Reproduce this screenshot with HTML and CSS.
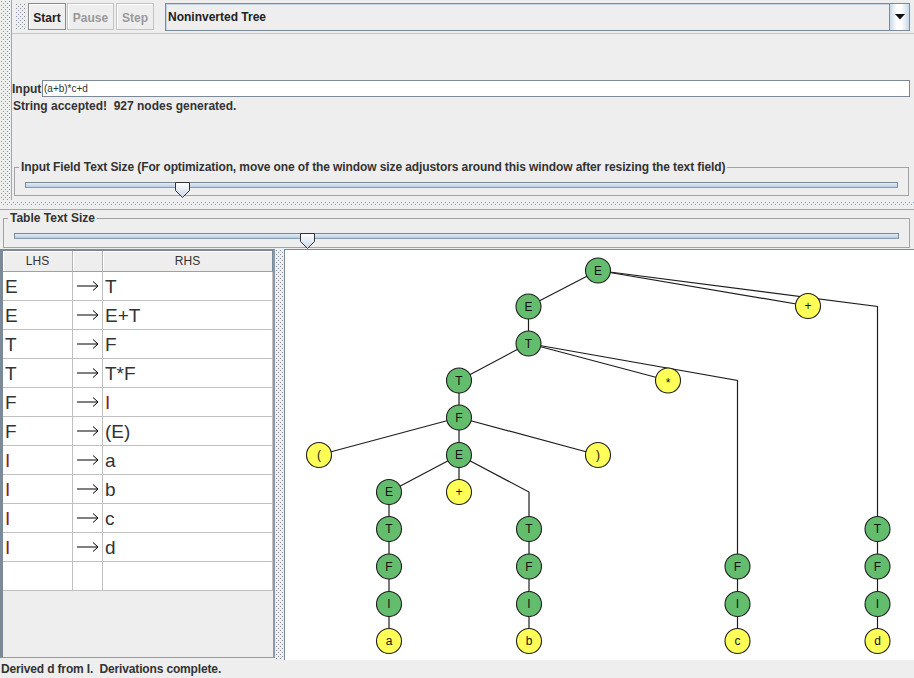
FILE: index.html
```html
<!DOCTYPE html>
<html>
<head>
<meta charset="utf-8">
<title>Brute Force Parser</title>
<link rel="stylesheet" href="styles.css">
</head>
<body>
<div class="app">
  <div class="upper">
    <div class="side-grip bumps"></div>
    <div class="upper-main">
      <div class="toolbar">
        <div class="tb-grip bumps"></div>
        <button class="tbtn start">Start</button>
        <button class="tbtn pause off">Pause</button>
        <button class="tbtn step off">Step</button>
        <div class="combo">
          <span class="combo-text">Noninverted Tree</span>
          <span class="combo-arrow"><svg width="10" height="6" viewBox="0 0 10 6"><path d="M0 0H10L5 5.5Z" fill="#111"/></svg></span>
        </div>
      </div>
      <div class="input-row">
        <span class="input-label">Input</span>
        <div class="field">(a+b)*c+d</div>
      </div>
      <div class="msg">String accepted!&nbsp; 927 nodes generated.</div>
      <fieldset class="titled t1">
        <legend>Input Field Text Size (For optimization, move one of the window size adjustors around this window after resizing the text field)</legend>
        <div class="slider s1">
          <div class="track"></div>
          <svg class="thumb" style="left:150px" width="15" height="16" viewBox="0 0 15 16"><defs><linearGradient id="tg1" x1="0" y1="0" x2="0" y2="1"><stop offset="0" stop-color="#ffffff"/><stop offset="1" stop-color="#c6d7ea"/></linearGradient></defs><path d="M0.5 0.5H14.5V8.5L7.5 15.5L0.5 8.5Z" fill="url(#tg1)" stroke="#333"/></svg>
        </div>
      </fieldset>
    </div>
  </div>
  <div class="hdivider"></div>
  <fieldset class="titled t2">
    <legend>Table Text Size</legend>
    <div class="slider s2">
      <div class="track"></div>
      <svg class="thumb" style="left:286px" width="15" height="16" viewBox="0 0 15 16"><defs><linearGradient id="tg2" x1="0" y1="0" x2="0" y2="1"><stop offset="0" stop-color="#ffffff"/><stop offset="1" stop-color="#c6d7ea"/></linearGradient></defs><path d="M0.5 0.5H14.5V8.5L7.5 15.5L0.5 8.5Z" fill="url(#tg2)" stroke="#333"/></svg>
    </div>
  </fieldset>
  <div class="lower">
    <div class="table-pane">
      <table class="grammar">
        <colgroup><col class="c1"><col class="c2"><col class="c3"></colgroup>
        <thead><tr><th>LHS</th><th></th><th>RHS</th></tr></thead>
        <tbody>
          <tr><td>E</td><td class="arr"><svg width="22" height="10" viewBox="0 0 22 10"><path d="M0 5H21M16 0.5L21 5L16 9.5" fill="none" stroke="#000" stroke-width="1"/></svg></td><td>T</td></tr>
          <tr><td>E</td><td class="arr"><svg width="22" height="10" viewBox="0 0 22 10"><path d="M0 5H21M16 0.5L21 5L16 9.5" fill="none" stroke="#000" stroke-width="1"/></svg></td><td>E+T</td></tr>
          <tr><td>T</td><td class="arr"><svg width="22" height="10" viewBox="0 0 22 10"><path d="M0 5H21M16 0.5L21 5L16 9.5" fill="none" stroke="#000" stroke-width="1"/></svg></td><td>F</td></tr>
          <tr><td>T</td><td class="arr"><svg width="22" height="10" viewBox="0 0 22 10"><path d="M0 5H21M16 0.5L21 5L16 9.5" fill="none" stroke="#000" stroke-width="1"/></svg></td><td>T*F</td></tr>
          <tr><td>F</td><td class="arr"><svg width="22" height="10" viewBox="0 0 22 10"><path d="M0 5H21M16 0.5L21 5L16 9.5" fill="none" stroke="#000" stroke-width="1"/></svg></td><td><span class="var">I</span></td></tr>
          <tr><td>F</td><td class="arr"><svg width="22" height="10" viewBox="0 0 22 10"><path d="M0 5H21M16 0.5L21 5L16 9.5" fill="none" stroke="#000" stroke-width="1"/></svg></td><td>(E)</td></tr>
          <tr><td><span class="var">I</span></td><td class="arr"><svg width="22" height="10" viewBox="0 0 22 10"><path d="M0 5H21M16 0.5L21 5L16 9.5" fill="none" stroke="#000" stroke-width="1"/></svg></td><td>a</td></tr>
          <tr><td><span class="var">I</span></td><td class="arr"><svg width="22" height="10" viewBox="0 0 22 10"><path d="M0 5H21M16 0.5L21 5L16 9.5" fill="none" stroke="#000" stroke-width="1"/></svg></td><td>b</td></tr>
          <tr><td><span class="var">I</span></td><td class="arr"><svg width="22" height="10" viewBox="0 0 22 10"><path d="M0 5H21M16 0.5L21 5L16 9.5" fill="none" stroke="#000" stroke-width="1"/></svg></td><td>c</td></tr>
          <tr><td><span class="var">I</span></td><td class="arr"><svg width="22" height="10" viewBox="0 0 22 10"><path d="M0 5H21M16 0.5L21 5L16 9.5" fill="none" stroke="#000" stroke-width="1"/></svg></td><td>d</td></tr>
          <tr><td></td><td></td><td></td></tr>
        </tbody>
      </table>
    </div>
    <div class="vdivider bumps"></div>
    <div class="tree-pane">
      <svg class="tree" width="629" height="409" viewBox="285 251 629 409">
        <g class="edges">
          <path d="M598 271.5L528.5 307.5"/>
          <path d="M598 271.5L808 307"/>
          <path d="M598 271.5L877.5 307.5L877.5 530"/>
          <path d="M528.5 307.5L528.5 344.5"/>
          <path d="M528.5 344.5L459 381.5"/>
          <path d="M528.5 344.5L668 381.5"/>
          <path d="M528.5 344.5L737.5 381.5L737.5 567.5"/>
          <path d="M459 381.5L459 418.5"/>
          <path d="M459 418.5L319 456"/>
          <path d="M459 418.5L459 456"/>
          <path d="M459 418.5L598 456"/>
          <path d="M459 456L389 493"/>
          <path d="M459 456L459 493"/>
          <path d="M459 456L529 493L529 530"/>
          <path d="M389 493L389 642"/>
          <path d="M529 530L529 642"/>
          <path d="M737.5 567.5L737.5 642"/>
          <path d="M877.5 530L877.5 642"/>
        </g>
        <g class="nt">
          <circle cx="598" cy="271.5" r="12.5"/><text x="598" y="275.8">E</text>
          <circle cx="528.5" cy="307.5" r="12.5"/><text x="528.5" y="311.8">E</text>
          <circle cx="528.5" cy="344.5" r="12.5"/><text x="528.5" y="348.8">T</text>
          <circle cx="459" cy="381.5" r="12.5"/><text x="459" y="385.8">T</text>
          <circle cx="459" cy="418.5" r="12.5"/><text x="459" y="422.8">F</text>
          <circle cx="459" cy="456" r="12.5"/><text x="459" y="460.3">E</text>
          <circle cx="389" cy="493" r="12.5"/><text x="389" y="497.3">E</text>
          <circle cx="389" cy="530" r="12.5"/><text x="389" y="534.3">T</text>
          <circle cx="529" cy="530" r="12.5"/><text x="529" y="534.3">T</text>
          <circle cx="877.5" cy="530" r="12.5"/><text x="877.5" y="534.3">T</text>
          <circle cx="389" cy="567.5" r="12.5"/><text x="389" y="571.8">F</text>
          <circle cx="529" cy="567.5" r="12.5"/><text x="529" y="571.8">F</text>
          <circle cx="737.5" cy="567.5" r="12.5"/><text x="737.5" y="571.8">F</text>
          <circle cx="877.5" cy="567.5" r="12.5"/><text x="877.5" y="571.8">F</text>
          <circle cx="389" cy="605" r="12.5"/><text x="389" y="609.3">I</text>
          <circle cx="529" cy="605" r="12.5"/><text x="529" y="609.3">I</text>
          <circle cx="737.5" cy="605" r="12.5"/><text x="737.5" y="609.3">I</text>
          <circle cx="877.5" cy="605" r="12.5"/><text x="877.5" y="609.3">I</text>
        </g>
        <g class="tm">
          <circle cx="808" cy="307" r="12.5"/><text x="808" y="311">+</text>
          <circle cx="668" cy="381.5" r="12.5"/><text x="668" y="387.5">*</text>
          <circle cx="319" cy="456" r="12.5"/><text x="319" y="460.3">(</text>
          <circle cx="598" cy="456" r="12.5"/><text x="598" y="460.3">)</text>
          <circle cx="459" cy="493" r="12.5"/><text x="459" y="497">+</text>
          <circle cx="389" cy="642" r="12.5"/><text x="389" y="646.3">a</text>
          <circle cx="529" cy="642" r="12.5"/><text x="529" y="646.3">b</text>
          <circle cx="737.5" cy="642" r="12.5"/><text x="737.5" y="646.3">c</text>
          <circle cx="877.5" cy="642" r="12.5"/><text x="877.5" y="646.3">d</text>
        </g>
      </svg>
    </div>
  </div>
  <div class="status">Derived d from I.&nbsp; Derivations complete.</div>
</div>
</body>
</html>
```

FILE: styles.css
```css
* { box-sizing: border-box; }
html, body { margin: 0; padding: 0; }
body {
  width: 914px;
  height: 678px;
  overflow: hidden;
  background: #eeeeee;
  font-family: "Liberation Sans", Arial, sans-serif;
  font-size: 12px;
  color: #333333;
}
.app { display: flex; flex-direction: column; height: 678px; }

.bumps {
  background-color: #eeeeee;
  background-image:
    conic-gradient(from 270deg at 1px 1px, #8593a2 25%, transparent 0),
    conic-gradient(from 270deg at 1px 1px, #8593a2 25%, transparent 0);
  background-size: 4px 4px;
  background-position: 1px 1px, 3px 3px;
}

/* upper area */
.upper { display: flex; height: 200px; }
.side-grip { width: 12px; border-right: 1px solid #a6a6a6; }
.upper-main { flex: 1; display: flex; flex-direction: column; min-width: 0; }

.toolbar {
  display: flex;
  align-items: flex-start;
  height: 34px;
  padding-top: 3px;
  border-bottom: 1px solid #c6c6c6;
}
.tb-grip { width: 10px; height: 27px; margin-left: 3px; margin-right: 3px; }
.tbtn {
  height: 27px;
  margin: 0;
  padding: 2px 0 0;
  font-family: inherit;
  font-size: 12px;
  font-weight: bold;
  background: #eeeeee;
  border: 1px solid #c4c4c4;
  box-shadow: inset 1px 1px 0 #ffffff;
  color: #999999;
}
.tbtn.start { width: 38px; border-color: #8a8a8a; color: #222; }
.tbtn.pause { width: 47px; margin-left: 1px; }
.tbtn.step { width: 38px; margin-left: 2px; }
.combo {
  flex: 1;
  display: flex;
  height: 28px;
  margin-left: 11px;
  margin-right: 4px;
  border: 1px solid #7a8a99;
  box-shadow: inset 1px 1px 0 #c5d5e6;
  background: #eeeeee;
}
.combo-text { flex: 1; padding-left: 2px; padding-top: 1px; line-height: 25px; font-weight: bold; color: #222; }
.combo-arrow {
  width: 20px;
  display: flex;
  align-items: center;
  justify-content: center;
  border-left: 1px solid #7a8a99;
  background: linear-gradient(to right, #c9d8e8, #ffffff 35%, #ffffff 60%, #c9d8e8);
}

.input-row { display: flex; align-items: center; height: 17px; margin-top: 46px; }
.input-label { width: 30px; font-weight: bold; }
.field {
  flex: 1;
  height: 17px;
  margin-right: 4px;
  border: 1px solid #7a8a99;
  background: #ffffff;
  font-size: 10px;
  line-height: 15px;
  padding-left: 1px;
  color: #333;
}
.msg { height: 15px; margin-top: 2px; line-height: 15px; padding-left: 1px; font-weight: bold; }

.titled {
  margin: 0;
  padding: 0;
  border: 1px solid #a3a3a3;
  min-width: 0;
}
.titled legend {
  padding: 0 2px;
  margin-left: 4px;
  line-height: 14px;
  font-weight: bold;
  color: #333;
  white-space: nowrap;
}
.t1 legend { letter-spacing: -0.1px; }
.t1 { margin: 46px 5px 0 2px; padding: 3px 0 2px; height: 36px; }
.t2 { margin: 1px 4px 0 3px; padding: 3px 0 3px; height: 37px; }

.slider { position: relative; height: 16px; }
.s1 { margin: 0 10px; }
.s2 { margin: 0 10px; }
.track {
  margin-top: 5px;
  height: 6px;
  border: 1px solid #7a8a99;
  border-bottom-color: #8d9cab;
  background: linear-gradient(#e3ecf5, #b9cee4);
}
.thumb { position: absolute; top: 0; display: block; }

.hdivider {
  height: 10px;
  padding: 2px 0 3px;
  border-bottom: 1px solid #a6a6a6;
  background-clip: content-box;
  background-origin: content-box;
  background-color: #eeeeee;
  background-image:
    conic-gradient(from 270deg at 1px 1px, #8593a2 25%, transparent 0),
    conic-gradient(from 270deg at 1px 1px, #8593a2 25%, transparent 0);
  background-size: 4px 4px;
  background-position: 1px 0, 3px 2px;
  background-repeat: repeat;
}

/* lower area */
.lower { display: flex; height: 411px; margin-top: 1px; }
.table-pane {
  width: 275px;
  height: 409px;
  border-top: 2px solid #7a8a99;
  border-left: 3px solid #7a8a99;
  border-right: 2px solid #8a99a8;
  border-bottom: 1px solid #9a9a9a;
  background: #eeeeee;
}
.grammar {
  width: 270px;
  table-layout: fixed;
  border-collapse: separate;
  border-spacing: 0;
  color: #333;
}
.grammar .c1 { width: 70px; }
.grammar .c2 { width: 30px; }
.grammar .c3 { width: 170px; }
.grammar th {
  height: 21px;
  padding: 0;
  font-weight: normal;
  font-size: 12px;
  text-align: center;
  background: #eeeeee;
  border-right: 1px solid #b4b4b4;
  border-bottom: 1px solid #a0a0a0;
  box-shadow: inset 1px 1px 0 #ffffff;
}
.grammar th:last-child { border-right-color: #7a8a99; }
.grammar td {
  height: 29px;
  padding: 2px 0 0 2px;
  line-height: 26px;
  font-size: 19px;
  background: #ffffff;
  border-right: 1px solid #c0c0c0;
  border-bottom: 1px solid #c0c0c0;
  vertical-align: top;
  white-space: nowrap;
}
.grammar td.arr { padding: 0 0 0 4px; vertical-align: middle; }
.grammar td.arr svg { display: block; }
.var { color: #8a1d1d; }

.vdivider { width: 9px; height: 411px; }
.tree-pane {
  flex: 1;
  height: 411px;
  border-top: 1px solid #7a8a99;
  border-left: 1px solid #7a8a99;
  background: #ffffff;
}
.tree { display: block; }
.tree .edges path { fill: none; stroke: #1e1e1e; stroke-width: 1.2; }
.tree circle { stroke: #1e1e1e; stroke-width: 1.1; }
.tree .nt circle { fill: #63bd6d; }
.tree .tm circle { fill: #ffff57; }
.tree text {
  font-family: "Liberation Sans", Arial, sans-serif;
  font-size: 12px;
  fill: #111;
  text-anchor: middle;
}

.status { height: 18px; line-height: 18px; padding-left: 1px; font-weight: bold; letter-spacing: -0.15px; }
```
